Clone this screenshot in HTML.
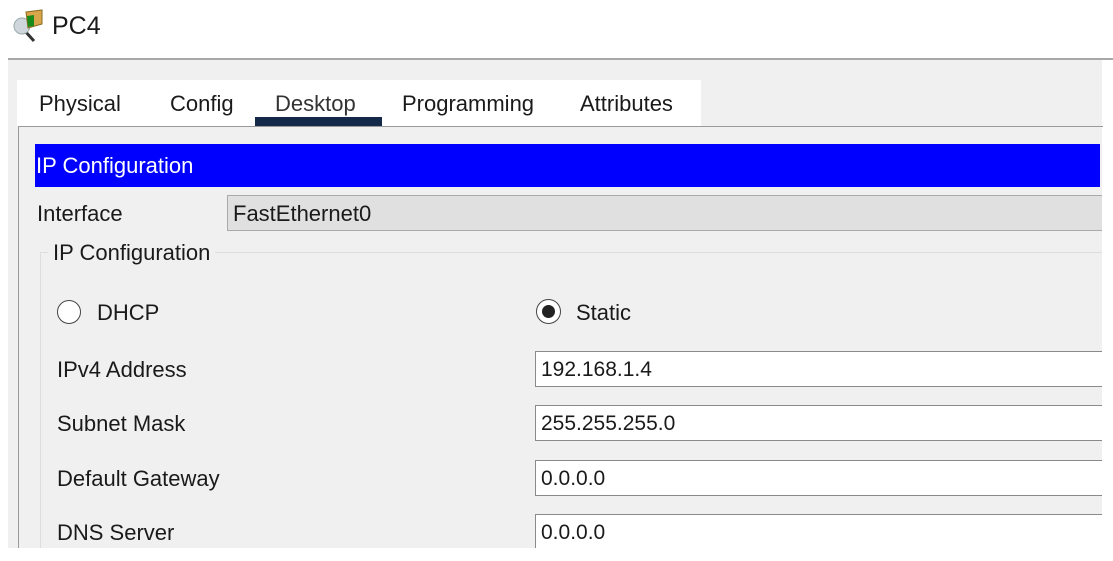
<!DOCTYPE html>
<html><head><style>
body{margin:0;width:1113px;height:561px;background:#fff;position:relative;overflow:hidden;font-family:"Liberation Sans",Arial,sans-serif;color:#1a1a1a}
.a{position:absolute}
.t{font-size:22px;white-space:nowrap}
.f{background:#fff;border:1px solid #8a8a8a;border-right:none;height:36px;left:535px;width:567px;box-sizing:border-box;font-size:21px;padding:6px 0 0 5px}
</style></head><body>
<svg class="a" style="left:12px;top:8px" width="36" height="36" viewBox="0 0 36 36">
<line x1="12" y1="22" x2="22" y2="33" stroke="#333" stroke-width="3"/>
<circle cx="10" cy="18" r="8" fill="#cfd6dc" stroke="#9aa" stroke-width="1"/>
<polygon points="14,4 30,2 30,16 16,20" fill="#d9a64a" stroke="#8a6a20"/>
<polygon points="15,8 22,7 22,18 16,19" fill="#1a8a1a"/>
</svg>
<div class="a t" style="left:52px;top:12px;font-size:25px">PC4</div>
<div class="a" style="left:8px;top:58px;width:1105px;height:2px;background:#a8a8a8"></div>
<div class="a" style="left:8px;top:60px;width:1094px;height:488px;background:#f0f0f0"></div>
<div class="a" style="left:17px;top:80px;width:684px;height:46px;background:#fff"></div>
<div class="a t" style="left:39px;top:91px">Physical</div>
<div class="a t" style="left:170px;top:91px">Config</div>
<div class="a t" style="left:275px;top:91px;color:#333">Desktop</div>
<div class="a" style="left:255px;top:117px;width:127px;height:9px;background:#14284a"></div>
<div class="a t" style="left:402px;top:91px">Programming</div>
<div class="a t" style="left:580px;top:91px">Attributes</div>
<div class="a" style="left:18px;top:126px;width:1084px;height:422px;border-left:1px solid #9a9a9a;border-top:1px solid #9a9a9a"></div>
<div class="a" style="left:35px;top:144px;width:1065px;height:43px;background:#0000ff"></div>
<div class="a t" style="left:36px;top:153px;color:#fff">IP Configuration</div>
<div class="a t" style="left:37px;top:201px">Interface</div>
<div class="a" style="left:227px;top:195px;width:875px;height:36px;background:#e0e0e0;border:1px solid #aaa;border-right:none;box-sizing:border-box"></div>
<div class="a t" style="left:233px;top:201px">FastEthernet0</div>
<div class="a" style="left:40px;top:252px;width:1062px;height:1px;background:#ddd"></div>
<div class="a" style="left:40px;top:252px;width:1px;height:296px;background:#ddd"></div>
<div class="a t" style="left:48px;top:240px;background:#f0f0f0;padding:0 5px">IP Configuration</div>
<div class="a" style="left:57px;top:300px;width:24px;height:24px;border:1.5px solid #444;border-radius:50%;background:#fff;box-sizing:border-box"></div>
<div class="a t" style="left:97px;top:300px">DHCP</div>
<div class="a" style="left:536px;top:299px;width:25px;height:25px;border:1.5px solid #444;border-radius:50%;background:#fff;box-sizing:border-box"></div>
<div class="a" style="left:542px;top:305px;width:13px;height:13px;border-radius:50%;background:#222"></div>
<div class="a t" style="left:576px;top:300px">Static</div>
<div class="a t" style="left:57px;top:357px">IPv4 Address</div>
<div class="a t" style="left:57px;top:411px">Subnet Mask</div>
<div class="a t" style="left:57px;top:466px">Default Gateway</div>
<div class="a t" style="left:57px;top:520px">DNS Server</div>
<div class="a f" style="top:351px">192.168.1.4</div>
<div class="a f" style="top:405px">255.255.255.0</div>
<div class="a f" style="top:460px">0.0.0.0</div>
<div class="a f" style="top:514px;height:40px">0.0.0.0</div>
<div class="a" style="left:0;top:548px;width:1113px;height:13px;background:#fff"></div>
</body></html>
